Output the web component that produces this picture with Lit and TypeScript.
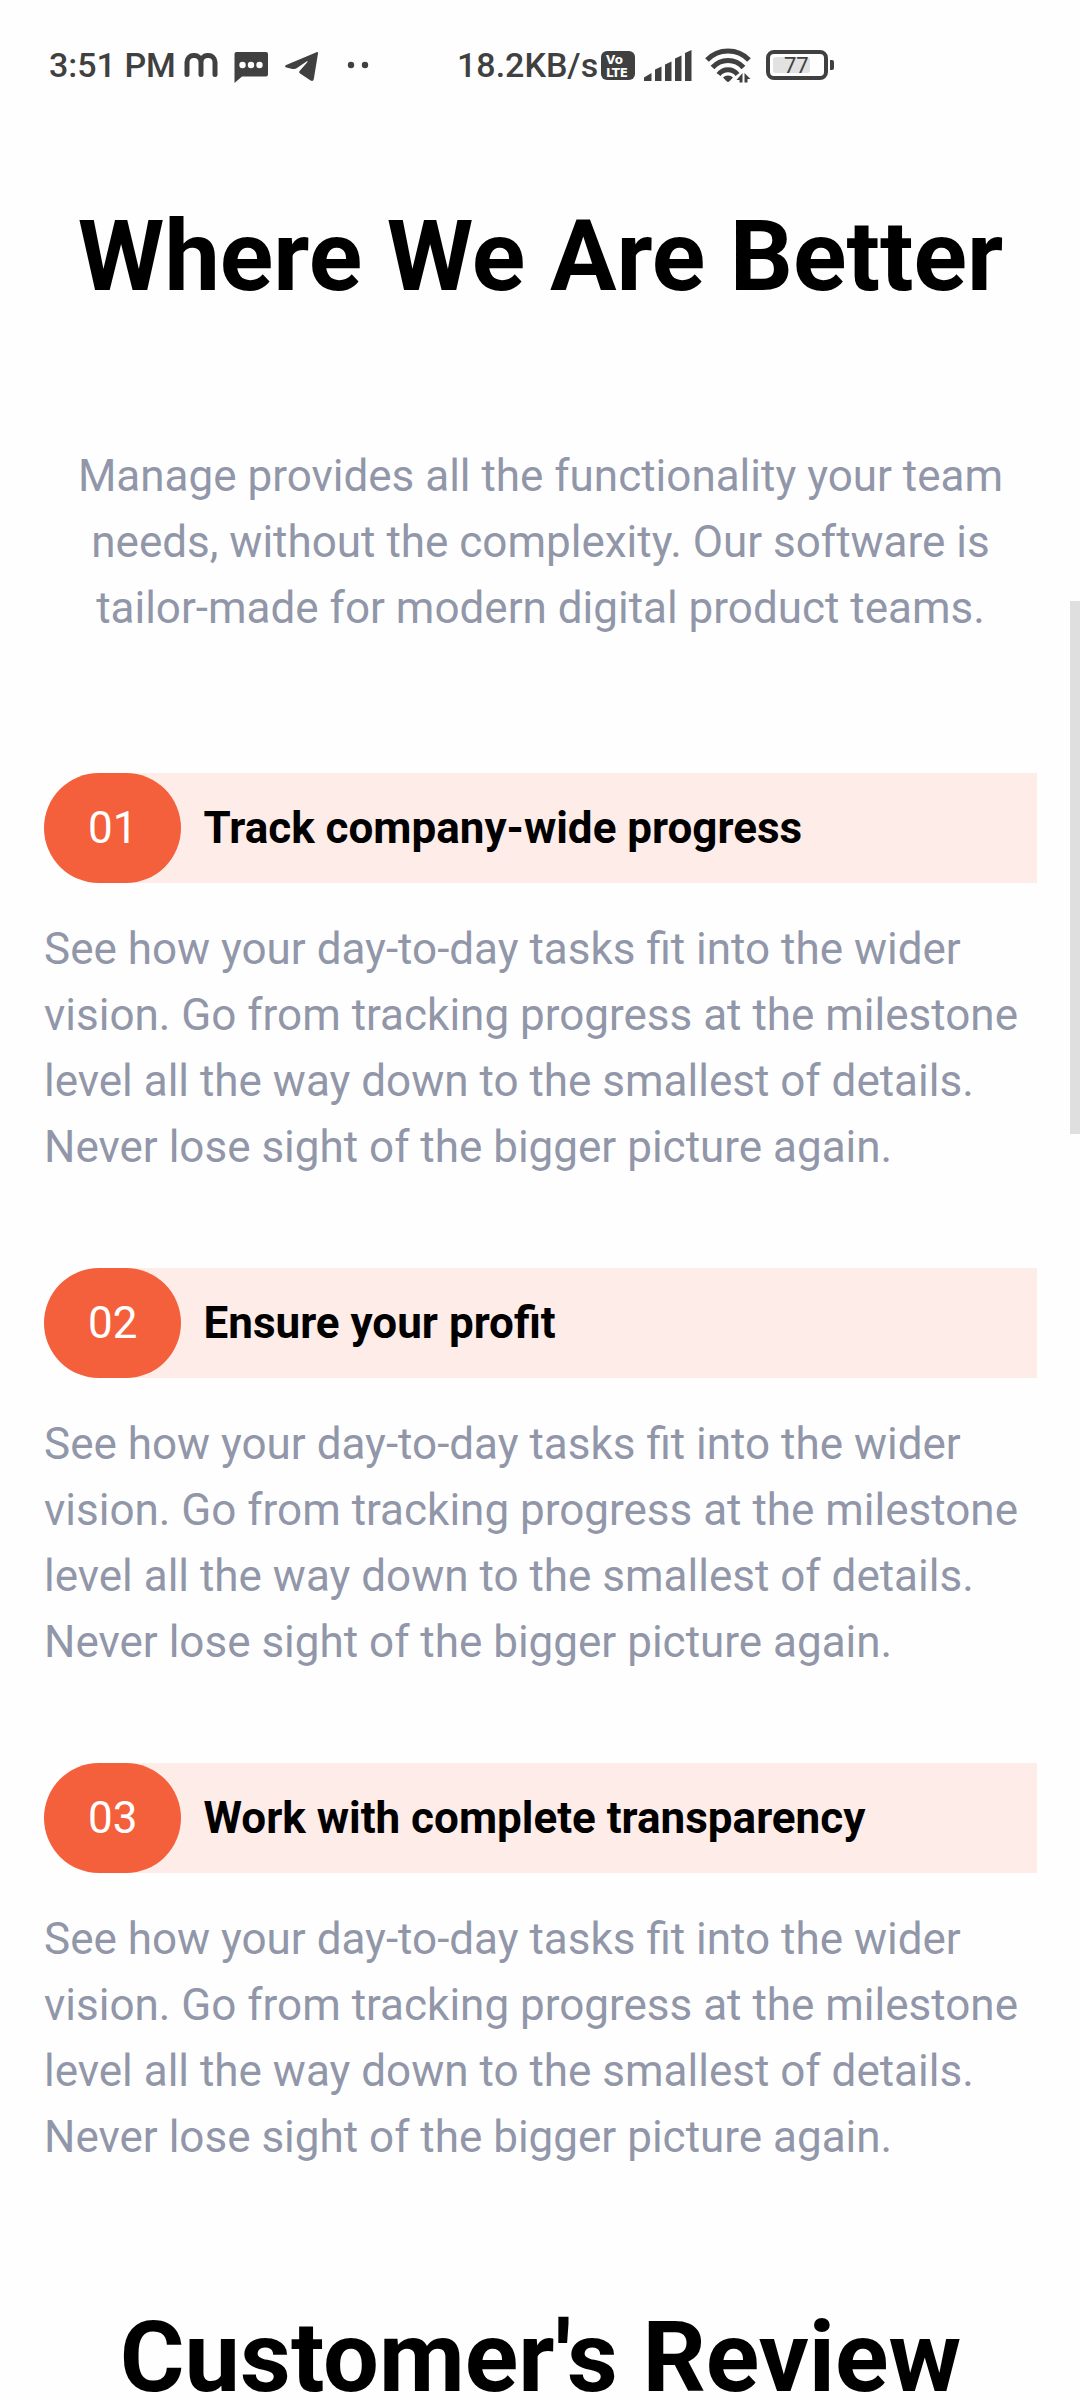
import { LitElement, html, css } from "lit";
import { customElement, property } from "lit/decorators.js";

const features = [
  { number: "01", title: "Track company-wide progress" },
  { number: "02", title: "Ensure your profit" },
  { number: "03", title: "Work with complete transparency" },
];

@customElement("status-bar")
class StatusBar extends LitElement {
  static styles = css`
    :host {
      display: flex;
      align-items: center;
      height: 129px;
      padding: 0 49px;
      box-sizing: border-box;
      color: #404040;
      font: 500 34px/40px Roboto, sans-serif;
      white-space: nowrap;
    }
    .group {
      display: flex;
      align-items: center;
    }
    .left {
      width: 408px;
      gap: 7px;
    }
    svg {
      display: block;
      flex: none;
      fill: currentColor;
    }
    .line {
      fill: none;
      stroke: currentColor;
      stroke-width: 5;
    }
    .badge {
      font: 700 12px "DejaVu Sans", sans-serif;
      fill: #fefefe;
    }
    .level {
      font: 400 22px Roboto, sans-serif;
    }
  `;

  render() {
    return html`
      <div class="group left">
        <span>3:51 PM</span>
        <svg width="188" height="48" viewBox="182 40 188 48" aria-hidden="true">
          <path class="line" stroke-linecap="round" d="M186 73.500V61a6.500 6.500 0 0 1 7-6.500a6.500 6.500 0 0 1 7 6.500V73.500M200 61a6.500 6.500 0 0 1 7-6.500a6.500 6.500 0 0 1 7 6.500V73.500" />
          <path d="M235 51h30a2 2 0 0 1 2 2v20.500a2 2 0 0 1-2 2h-24l-7.500 6.500V53a2 2 0 0 1 1.500-2z" />
          <g fill="#fefefe"><circle cx="241.500" cy="64" r="3.200" /><circle cx="250" cy="64" r="3.200" /><circle cx="258.500" cy="64" r="3.200" /></g>
          <path d="M315.500 51.200c1-.4 1.700.2 1.500 1.300L312.800 78c-.3 1.900-1.600 2.500-3.200 1.500l-10.500-7c-1.200-.8-1.200-1.700-.3-2.700l7.500-8.600c.7-.9.200-1.300-.8-.6l-9.500 6.500c-1.400 1-3 1.200-4.600.8l-6-1.500c-1.800-.5-1.800-1.700-.2-2.500z" />
          <circle cx="350" cy="64" r="3.200" /><circle cx="364" cy="64" r="3.200" />
        </svg>
      </div>
      <div class="group">
        <span>18.2KB/s</span>
        <svg width="240" height="48" viewBox="597 40 240 48" aria-hidden="true">
          <rect x="600" y="50" width="34" height="29" rx="6" />
          <text class="badge" x="605" y="63">Vo</text>
          <text class="badge" x="605" y="76">LTE</text>
          <path d="M643 76.500l7.500-4.500v8h-7.500zM654 68.500l6.500-3v14.500h-6.500zM664 63.500l6.500-3v19.500h-6.500zM674 57.500l6.500-3v25.500h-6.500zM684 52l6.500-3v31h-6.500z" />
          <g class="line">
            <path d="M706 59a29 29 0 0 1 42 0" />
            <path d="M711.500 66.500a20.500 20.500 0 0 1 31 0" />
            <path d="M717.500 73.500a12 12 0 0 1 19 0" />
          </g>
          <path d="M722 76.500a7 7 0 0 1 10 0l-3.600 3.800a2 2 0 0 1-2.800 0z" />
          <path d="M741.500 72v9.500h-3v-2.500h-3zM743.500 81.500v-9.500l6 6h-3v3.500z" />
          <rect x="767" y="51" width="58" height="26" rx="6" fill="none" stroke="currentColor" stroke-width="4" />
          <rect x="772" y="56" width="37" height="16" rx="3" fill="#e2e2e2" />
          <path d="M829 59h2a2 2 0 0 1 2 2v6a2 2 0 0 1-2 2h-2z" />
          <text class="level" x="783" y="72">77</text>
        </svg>
      </div>
    `;
  }
}

@customElement("feature-item")
class FeatureItem extends LitElement {
  @property() number = "";
  @property() heading = "";

  static styles = css`
    :host {
      display: flex;
      flex-direction: column;
      gap: 33px;
    }
    .bar {
      display: flex;
      align-items: center;
      gap: 22px;
      border-radius: 55px 0 0 55px;
      background: #feece8;
    }
    .pill {
      padding: 22px 44px;
      border-radius: 55px;
      background: #f4603c;
      color: #fefefe;
    }
    .title {
      margin: 0;
      font-size: 44px;
      font-weight: 700;
      color: #000;
    }
    .text {
      margin: 0;
      color: #9196a9;
    }
  `;

  render() {
    return html`
      <div class="bar">
        <span class="pill">${this.number}</span>
        <h3 class="title">${this.heading}</h3>
      </div>
      <p class="text">
        See how your day-to-day tasks fit into the wider vision. Go from
        tracking progress at the milestone level all the way down to the
        smallest of details. Never lose sight of the bigger picture again.
      </p>
    `;
  }
}

@customElement("app-root")
class AppRoot extends LitElement {
  static styles = css`
    :host {
      display: block;
      position: relative;
      height: 100vh;
      overflow: hidden;
      background: #fefefe;
      font: 400 44px/66px Roboto, sans-serif;
    }
    .page {
      display: flex;
      flex-direction: column;
      gap: 132px;
      padding: 72px 43px 0 44px;
    }
    .headline {
      margin: 0;
      font-size: 99px;
      line-height: 110px;
      font-weight: 700;
      text-align: center;
      color: #000;
    }
    .intro {
      margin: 0;
      padding: 0 22px;
      text-align: center;
      color: #9196a9;
    }
    .features {
      display: flex;
      flex-direction: column;
      gap: 88px;
    }
    .scroll-thumb {
      position: absolute;
      top: 601px;
      right: 0;
      width: 10px;
      height: 533px;
      background: #dfdfdf;
    }
  `;

  render() {
    return html`
      <status-bar></status-bar>
      <main class="page">
        <h2 class="headline">Where We Are Better</h2>
        <p class="intro">
          Manage provides all the functionality your team needs, without the
          complexity. Our software is tailor-made for modern digital product
          teams.
        </p>
        <section class="features">
          ${features.map(
            (f) => html`<feature-item .number=${f.number} .heading=${f.title}></feature-item>`
          )}
        </section>
        <h2 class="headline">Customer's Review</h2>
      </main>
      <div class="scroll-thumb"></div>
    `;
  }
}
